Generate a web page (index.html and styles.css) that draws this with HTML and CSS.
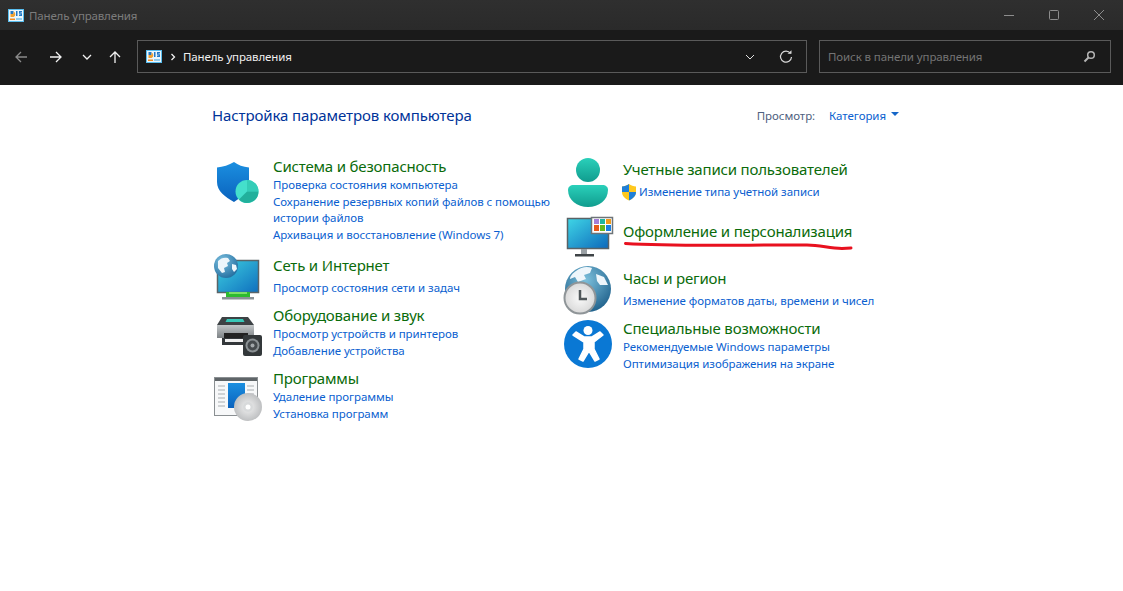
FILE: index.html
```html
<!DOCTYPE html>
<html lang="ru">
<head>
  <meta charset="UTF-8">
  <title>Панель управления</title>
  <link rel="stylesheet" href="styles.css">
</head>
<body>

  <svg class="defs" width="0" height="0">
    <symbol id="cp" viewBox="0 0 16 13">
      <rect width="16" height="13" fill="#58bdee"/>
      <rect x="1" y="1" width="14" height="11" fill="#eaf6fc"/>
      <path d="M2.500 2h3v3h-3z" fill="#2277c4"/>
      <path d="M5.500 2.500a3 3 0 0 1 0 5.500h-3V5h3z" fill="#f0a030"/>
      <path d="M8 2h1.500v5H8zM11 2h3v1.500h-1.500v.7H14V7h-3V5.500h1.500v-.7H11z" fill="#2277c4"/>
      <rect x="2" y="9.500" width="5" height="1.500" fill="#ee8a22"/>
      <rect x="8" y="9.500" width="6" height="1" fill="#3aa0dc"/>
    </symbol>
  </svg>

  <header class="titlebar">
    <svg class="app-icon"><use href="#cp"/></svg>
    <span class="titlebar-text">Панель управления</span>
    <div class="win-buttons">
      <svg width="12" height="12" viewBox="0 0 12 12"><path d="M1 6.500h10" stroke="#8d8d8d"/></svg>
      <svg width="12" height="12" viewBox="0 0 12 12"><rect x="1.500" y="1.500" width="9" height="9" rx="1" fill="none" stroke="#8d8d8d"/></svg>
      <svg width="12" height="12" viewBox="0 0 12 12"><path d="M1 1l10 10M11 1L1 11" stroke="#8d8d8d" fill="none"/></svg>
    </div>
  </header>

  <div class="toolbar">
    <nav class="nav-buttons">
      <svg class="nav-back" width="14" height="14" viewBox="0 0 14 14"><path d="M13 7H2M7 2L2 7l5 5" fill="none" stroke="#8b8b8b" stroke-width="1.300"/></svg>
      <svg class="nav-forward" width="14" height="14" viewBox="0 0 14 14"><path d="M1 7h11M7 2l5 5-5 5" fill="none" stroke="#f2f2f2" stroke-width="1.300"/></svg>
      <svg class="nav-down" width="10" height="10" viewBox="0 0 10 10"><path d="M1 3l4 4 4-4" fill="none" stroke="#f2f2f2" stroke-width="1.300"/></svg>
      <svg class="nav-up" width="14" height="14" viewBox="0 0 14 14"><path d="M7 13V2M2 7l5-5 5 5" fill="none" stroke="#f2f2f2" stroke-width="1.300"/></svg>
    </nav>
    <div class="address">
      <svg class="app-icon"><use href="#cp"/></svg>
      <svg class="crumb-sep" width="6" height="8" viewBox="0 0 6 8"><path d="M1.500 1l3 3-3 3" fill="none" stroke="#f2f2f2" stroke-width="1.300"/></svg>
      <span class="crumb">Панель управления</span>
      <svg class="addr-down" width="10" height="10" viewBox="0 0 10 10"><path d="M1 3l4 4 4-4" fill="none" stroke="#e0e0e0"/></svg>
      <svg class="addr-refresh" width="14" height="14" viewBox="0 0 14 14"><path d="M11.500 3.500A5.500 5.500 0 1 0 12.500 7" fill="none" stroke="#d8d8d8" stroke-width="1.200"/><path d="M8.500 3.800h4v-3.500z" fill="#d8d8d8"/></svg>
    </div>
    <div class="search">
      <span>Поиск в панели управления</span>
      <svg width="13" height="13" viewBox="0 0 13 13"><circle cx="8" cy="5" r="3.300" fill="none" stroke="#b5b5b5" stroke-width="1.500"/><path d="M5.500 7.500L1.500 11.500" stroke="#b5b5b5" stroke-width="2"/></svg>
    </div>
  </div>

  <main class="content">
    <div class="content-head">
      <h1>Настройка параметров компьютера</h1>
      <div class="view-by">
        <span class="view-label">Просмотр:</span>
        <a class="view-value">Категория</a>
        <span class="view-caret"></span>
      </div>
    </div>

    <div class="columns">
      <section class="col">

        <div class="cat cat-system">
          <svg class="cat-icon" viewBox="0 0 48 52">
            <defs>
              <linearGradient id="sh" x1="0" y1="0" x2="0" y2="1"><stop offset="0" stop-color="#1b8fe0"/><stop offset="1" stop-color="#0a62bd"/></linearGradient>
            </defs>
            <path d="M22 10c4 3 9 5 15 5.500V30c0 9-7 15-15 20C13 45 5 39 5 30V15.500C11 15 17 13 22 10z" fill="url(#sh)"/>
            <circle cx="35" cy="39.500" r="11.500" fill="#44e0cc"/>
            <path d="M35 28a11.500 11.500 0 0 1 11.500 11.500H35z" fill="#34cdb8"/>
            <path d="M35 39.500h11.500A11.500 11.500 0 0 1 26.900 47.600z" fill="#22b09c"/>
          </svg>
          <div class="cat-text">
            <h2>Система и безопасность</h2>
            <a>Проверка состояния компьютера</a>
            <a>Сохранение резервных копий файлов с помощью истории файлов</a>
            <a>Архивация и восстановление (Windows 7)</a>
          </div>
        </div>

        <div class="cat cat-network cat-single">
          <svg class="cat-icon" viewBox="0 0 48 52">
            <defs>
              <linearGradient id="scr1" x1="0" y1="0" x2="1" y2="1"><stop offset="0" stop-color="#3ed0e0"/><stop offset="1" stop-color="#0f6fbe"/></linearGradient>
              <radialGradient id="gl1" cx="0.350" cy="0.300" r="0.800"><stop offset="0" stop-color="#7cc0e0"/><stop offset="1" stop-color="#1f6a9c"/></radialGradient>
            </defs>
            <rect x="5.500" y="8.500" width="41" height="32" fill="url(#scr1)" stroke="#5a6468" stroke-width="1.500"/>
            <rect x="14" y="40" width="24" height="5" fill="#2dbb2f"/>
            <rect x="17" y="40" width="18" height="2" fill="#7be066"/>
            <rect x="10" y="45" width="32" height="2.500" fill="#8a9296"/>
            <circle cx="14" cy="14" r="12" fill="url(#gl1)"/>
            <path d="M6 9c3-3 6-4 10-3l2 3-3 2 1 3-4 2 1 4-3 1-4-5zM20 12l4 1 1 4-3 3-2-3z" fill="#eef6fb"/>
          </svg>
          <div class="cat-text">
            <h2>Сеть и Интернет</h2>
            <a>Просмотр состояния сети и задач</a>
          </div>
        </div>

        <div class="cat cat-hardware">
          <svg class="cat-icon" viewBox="0 0 48 52">
            <defs>
              <linearGradient id="pr" x1="0" y1="0" x2="0" y2="1"><stop offset="0" stop-color="#c2c6c8"/><stop offset="1" stop-color="#7d8285"/></linearGradient>
            </defs>
            <path d="M10 15h26l6 8H5z" fill="#3d4245"/>
            <path d="M15 17h16l1.500 3h-19z" fill="#38c8b8"/>
            <rect x="5" y="23" width="37" height="13" fill="url(#pr)"/>
            <rect x="12" y="31" width="24" height="5" fill="#222"/>
            <rect x="10" y="36" width="28" height="7" fill="#33373a"/>
            <rect x="13" y="37" width="20" height="3" fill="#f0f0f0"/>
            <rect x="31" y="33" width="19" height="21" rx="2" fill="#33383a"/>
            <circle cx="40.500" cy="43.500" r="7" fill="#8b9194"/>
            <circle cx="40.500" cy="43.500" r="5" fill="#454a4d"/>
            <circle cx="40.500" cy="43.500" r="2" fill="#a2a7aa"/>
          </svg>
          <div class="cat-text">
            <h2>Оборудование и звук</h2>
            <a>Просмотр устройств и принтеров</a>
            <a>Добавление устройства</a>
          </div>
        </div>

        <div class="cat cat-programs">
          <svg class="cat-icon" viewBox="0 0 48 52">
            <defs>
              <linearGradient id="pg" x1="0" y1="0" x2="0" y2="1"><stop offset="0" stop-color="#1b8fe0"/><stop offset="1" stop-color="#0a62bd"/></linearGradient>
              <radialGradient id="cd" cx="0.500" cy="0.500" r="0.600"><stop offset="0" stop-color="#f2f2f2"/><stop offset="1" stop-color="#b4b6b8"/></radialGradient>
            </defs>
            <rect x="2.500" y="12.500" width="43" height="38" fill="#f7f8f9" stroke="#8a8f92"/>
            <rect x="3" y="13" width="42" height="3" fill="#5f6568"/>
            <path d="M6 21h7M6 25h7M6 29h7M6 33h7M6 37h7M6 41h7M35 21h7M35 25h7M35 29h7" stroke="#a8adb0"/>
            <rect x="16" y="18" width="17" height="25" fill="url(#pg)"/>
            <circle cx="36" cy="42" r="14" fill="url(#cd)"/>
            <circle cx="36" cy="42" r="5" fill="#d8dadb"/>
            <circle cx="36" cy="42" r="2.500" fill="#fff"/>
          </svg>
          <div class="cat-text">
            <h2>Программы</h2>
            <a>Удаление программы</a>
            <a>Установка программ</a>
          </div>
        </div>

      </section>
      <section class="col">

        <div class="cat cat-users cat-single">
          <svg class="cat-icon" viewBox="0 0 48 52">
            <defs>
              <linearGradient id="us" x1="0" y1="0" x2="0" y2="1"><stop offset="0" stop-color="#2ad0ba"/><stop offset="1" stop-color="#109c8e"/></linearGradient>
            </defs>
            <circle cx="26" cy="14" r="12" fill="url(#us)"/>
            <path d="M12 29h28c4 0 6 2 6 5 0 10-9 17-20 17S6 44 6 34c0-3 2-5 6-5z" fill="url(#us)"/>
          </svg>
          <div class="cat-text">
            <h2>Учетные записи пользователей</h2>
            <a class="link-shield">
              <svg width="16" height="18" viewBox="0 0 16 18">
                <path d="M8 1c2 1.500 4.500 2.200 7 2.500V9c0 4-3 6.500-7 8.500C4 15.500 1 13 1 9V3.500C3.500 3.200 6 2.500 8 1z" fill="#ffc81e"/>
                <path d="M8 1v8H1V3.500C3.500 3.200 6 2.500 8 1zM8 9h7c0 4-3 6.500-7 8.500z" fill="#1f7fd8"/>
              </svg>
              Изменение типа учетной записи
            </a>
          </div>
        </div>

        <div class="cat cat-appearance">
          <svg class="cat-icon" viewBox="0 0 48 52">
            <defs>
              <linearGradient id="scr2" x1="0" y1="0" x2="1" y2="1"><stop offset="0" stop-color="#3fd6e6"/><stop offset="1" stop-color="#0d68bb"/></linearGradient>
            </defs>
            <rect x="5.500" y="0.500" width="41" height="30" fill="url(#scr2)" stroke="#5a6266" stroke-width="1.500"/>
            <rect x="19" y="31" width="6" height="5" fill="#9aa0a4"/>
            <rect x="13" y="36" width="19" height="2.500" fill="#3f4447"/>
            <rect x="29.500" y="-0.500" width="21" height="16" fill="#fff" stroke="#6e7478" stroke-width="1.500"/>
            <rect x="32" y="1" width="5" height="5" fill="#a47ed8"/>
            <rect x="38" y="1" width="5" height="5" fill="#20b5a0"/>
            <rect x="44" y="1" width="5" height="5" fill="#f09a1a"/>
            <rect x="32" y="7" width="5" height="6" fill="#e8581a"/>
            <rect x="38" y="7" width="5" height="6" fill="#66b81e"/>
            <rect x="44" y="7" width="5" height="6" fill="#1a7fe0"/>
          </svg>
          <div class="cat-text">
            <h2>Оформление и персонализация</h2>
          </div>
        </div>

        <div class="cat cat-clock cat-single">
          <svg class="cat-icon" viewBox="0 0 48 52">
            <defs>
              <radialGradient id="gl2" cx="0.450" cy="0.300" r="0.750"><stop offset="0" stop-color="#7cc0dc"/><stop offset="1" stop-color="#1c5d88"/></radialGradient>
              <radialGradient id="clk" cx="0.500" cy="0.500" r="0.550"><stop offset="0" stop-color="#fafafa"/><stop offset="1" stop-color="#d6d6d6"/></radialGradient>
            </defs>
            <circle cx="26" cy="24" r="23" fill="url(#gl2)"/>
            <path d="M14 6c5-4 11-5 16-3l-2 5-6 2 2 4-8 3-3-5-5 2c0-3 3-6 6-8zM34 9l8 3 4 8-8 0-3-4z" fill="#eef6fb"/>
            <circle cx="18" cy="33" r="15.500" fill="url(#clk)" stroke="#8f9598" stroke-width="2"/>
            <path d="M18 25v9h7" fill="none" stroke="#50575a" stroke-width="2.500"/>
          </svg>
          <div class="cat-text">
            <h2>Часы и регион</h2>
            <a>Изменение форматов даты, времени и чисел</a>
          </div>
        </div>

        <div class="cat cat-access">
          <svg class="cat-icon" viewBox="0 0 48 52">
            <circle cx="26" cy="29" r="24" fill="#0a78d4"/>
            <circle cx="26" cy="15.500" r="4.500" fill="#fff"/>
            <path d="M11 20l3-3 8 5h8l8-5 3 3-9 7v7l5 10-4 2-6-10-6 10-4-2 5-10v-7z" fill="#fff" stroke="#fff" stroke-linejoin="round" stroke-width="1.500"/>
          </svg>
          <div class="cat-text">
            <h2>Специальные возможности</h2>
            <a>Рекомендуемые Windows параметры</a>
            <a>Оптимизация изображения на экране</a>
          </div>
        </div>

      </section>
    </div>

    <svg class="scribble" width="240" height="12" viewBox="0 0 240 12">
      <path d="M3.500 2.500C60 6 130 3.500 185 4c14 0 22 3.500 35 3.500L229 7" fill="none" stroke="#e8111f" stroke-width="3" stroke-linecap="round"/>
    </svg>
  </main>

</body>
</html>
```

FILE: styles.css
```css
* { box-sizing: border-box; }
html, body { margin: 0; height: 100%; }
body { font-family: "Noto Sans", "Open Sans", sans-serif; background: #fff; overflow: hidden; }
h1, h2 { margin: 0; font-weight: 400; }
.defs { position: absolute; }

.titlebar { height: 30px; background: linear-gradient(#2f2f2f, #2a2a2a); display: flex; align-items: center; padding-left: 8px; }
.app-icon { width: 16px; height: 13px; flex: none; }
.titlebar-text { margin-left: 5px; font-size: 11.500px; letter-spacing: -0.150px; color: #7c7c7c; }
.win-buttons { margin-left: auto; display: flex; gap: 33px; padding-right: 18px; margin-top: -1px; }

.toolbar { height: 55px; background: #1a1a1a; display: flex; align-items: flex-start; padding-top: 10px; }
.nav-buttons { width: 137px; height: 33px; display: flex; align-items: center; padding-left: 14px; flex: none; }
.nav-forward { margin-left: 21px; }
.nav-down { margin-left: 19px; }
.nav-up { margin-left: 16px; }
.address { width: 670px; height: 33px; border: 1px solid #5a5a5a; display: flex; align-items: center; padding-left: 8px; padding-right: 13px; }
.crumb-sep { margin-left: 8px; }
.crumb { margin-left: 7px; font-size: 11.500px; letter-spacing: -0.120px; color: #f0f0f0; }
.addr-down { margin-left: auto; }
.addr-refresh { margin-left: 24px; }
.search { width: 292px; height: 33px; margin-left: 12px; border: 1px solid #5a5a5a; display: flex; align-items: center; justify-content: space-between; padding: 0 14px 0 8px; font-size: 11.500px; letter-spacing: -0.100px; color: #747474; }

.content { position: relative; padding: 0 0 0 212px; }
.content-head { width: 687px; height: 70px; display: flex; justify-content: space-between; padding-top: 20px; }
h1 { font-size: 15px; line-height: 20px; letter-spacing: -0.100px; color: #003399; }
.view-by { display: flex; align-items: center; height: 20px; font-size: 11.500px; letter-spacing: -0.060px; }
.view-label { color: #4f6180; }
.view-value { margin-left: 14px; color: #0b5fd0; }
.view-caret { margin-left: 5px; margin-top: -3px; border: 4px solid transparent; border-top: 4px solid #1566c8; border-bottom: 0; }

.columns { display: flex; }
.col { width: 350px; flex: none; }
.cat { display: flex; }
.cat-icon { width: 48px; height: 52px; margin: -3px 13px 0 0; flex: none; overflow: visible; }
.cat-text { width: 282px; }
.cat-text h2 { font-size: 15px; line-height: 20px; margin-bottom: 1px; letter-spacing: -0.180px; color: #0a6b0a; }
.cat-text a { display: block; font-size: 11.500px; letter-spacing: -0.060px; line-height: 16.500px; color: #0b5fd0; }
.cat-single a { margin-top: 5px; }

/* heights are set per block: icons overlap the row gap in the original */
.cat-system { height: 99px; margin-top: 1px; }
.cat-system .cat-icon { margin-top: -4px; }
.cat-network { height: 50px; }
.cat-hardware { height: 63px; }
.cat-users { height: 62px; margin-top: 4px; }
.cat-appearance { height: 47px; }
.cat-clock { height: 50px; }

.link-shield { display: flex !important; align-items: center; gap: 2px; margin-left: -2px; margin-top: 4px !important; }

.scribble { position: absolute; left: 622px; top: 156px; }
```
